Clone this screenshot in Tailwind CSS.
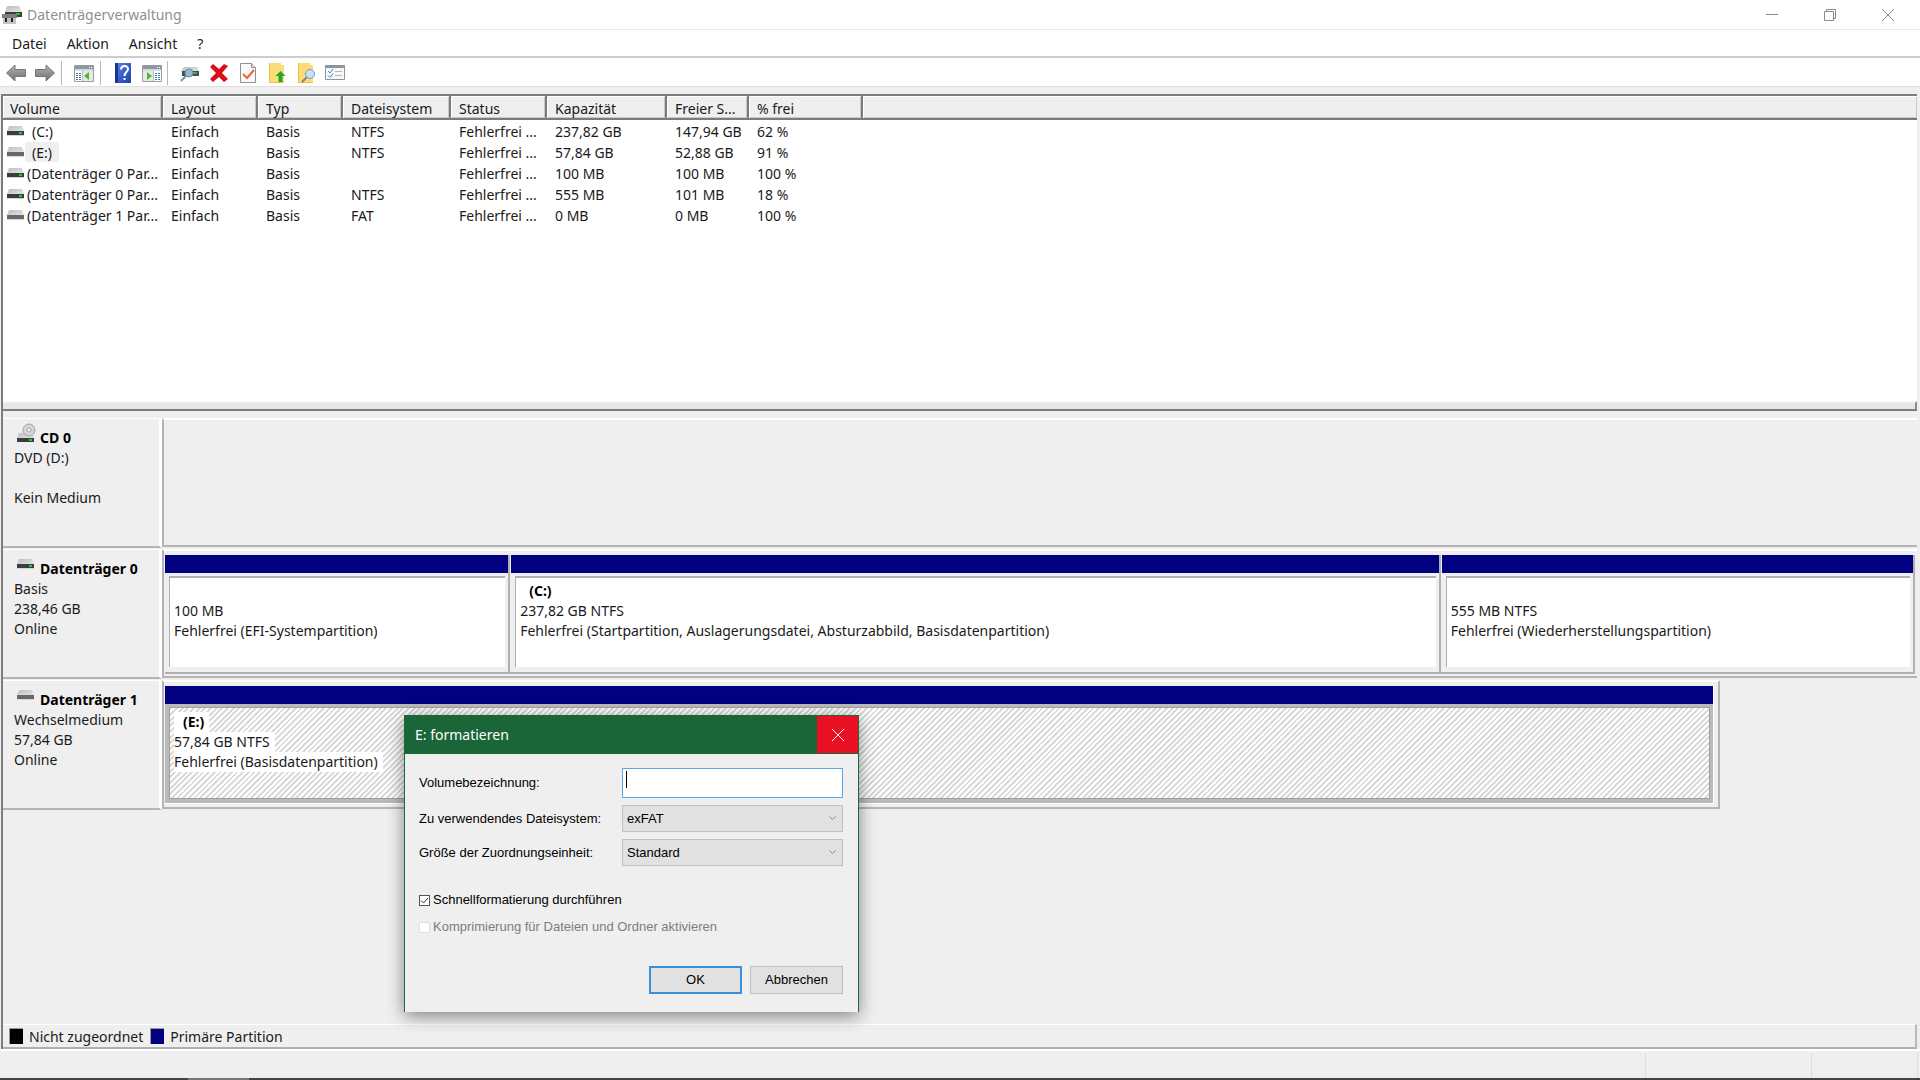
<!DOCTYPE html>
<html lang="de">
  <head>
    <meta charset="UTF-8" />
    <meta name="viewport" content="width=device-width, initial-scale=1.0" />
    <title>Datenträgerverwaltung</title>
    <script src="https://cdn.jsdelivr.net/npm/@tailwindcss/browser@4"></script>
  </head>
  <body class="relative min-h-screen flex flex-col bg-[#efefef] text-[#1a1a1a] text-[14px] leading-5 font-['Noto_Sans','Open_Sans',sans-serif] whitespace-nowrap">
    <!-- Icons -->
    <svg class="absolute w-0 h-0">
      <defs>
        <linearGradient id="metal" x1="0" y1="0" x2="1" y2="1">
          <stop offset="0" stop-color="#b9bec2" />
          <stop offset="1" stop-color="#e2e5e8" />
        </linearGradient>
        <linearGradient id="arrow" x1="0" y1="0" x2="0" y2="1">
          <stop offset="0" stop-color="#b5b5b5" />
          <stop offset="1" stop-color="#6e6e6e" />
        </linearGradient>
        <linearGradient id="book" x1="0" y1="0" x2="1" y2="1">
          <stop offset="0" stop-color="#5b84e0" />
          <stop offset="1" stop-color="#1c3fae" />
        </linearGradient>
      </defs>
      <symbol id="drive" viewBox="0 0 17 10">
        <path d="M2 0h13l2 5H0z" fill="url(#metal)" />
        <path d="M0 5h17v4H0z" fill="#3a3c3e" />
        <path d="M0 9h17v1H0z" fill="#d4d6d8" />
        <path d="M12 6h3v2h-3z" fill="#1fd02f" />
      </symbol>
      <symbol id="removable" viewBox="0 0 17 10">
        <path d="M2 0h13l2 5H0z" fill="url(#metal)" />
        <path d="M0 5h17v4H0z" fill="#66686a" />
        <path d="M0 9h17v1H0z" fill="#d4d6d8" />
      </symbol>
    </svg>

    <!-- Titelleiste -->
    <header class="h-[30px] flex items-center pr-[3px] bg-white border-b border-[#e8e8e8] text-[#8f8f8f]">
      <svg class="w-5 h-5 ml-[2px] mr-[5px]" viewBox="0 0 20 20">
        <path d="M5 1h12l3 6H3z" fill="url(#metal)" />
        <path d="M3 7h17v5H3z" fill="#3a3c3e" />
        <path d="M14 8h4v2h-4z" fill="#1fc52f" />
        <path d="M0 9h15v4h-1v6H1v-6H0z" fill="#7d7f80" />
        <path d="M1 13h13v6H1z" fill="#c3c4c5" />
        <path d="M3 13h2v4H3zM9 13h2v4H9z" fill="#222" />
      </svg>
      <h1 class="flex-1">Datenträgerverwaltung</h1>
      <button class="w-[58px] h-full flex items-center justify-center" aria-label="Minimieren">
        <svg class="w-3 h-3" viewBox="0 0 12 12" stroke="#8a8a8a" fill="none"><path d="M0 5.5h12" /></svg>
      </button>
      <button class="w-[58px] h-full flex items-center justify-center" aria-label="Verkleinern">
        <svg class="w-3 h-3" viewBox="0 0 12 12" stroke="#8a8a8a" fill="none"><path d="M.5 2.5h9v9h-9zM2.500 2.500v-2h9v9h-2" /></svg>
      </button>
      <button class="w-[58px] h-full flex items-center justify-center" aria-label="Schließen">
        <svg class="w-3 h-3" viewBox="0 0 12 12" stroke="#8a8a8a" fill="none"><path d="M0 0l12 12M12 0L0 12" /></svg>
      </button>
    </header>

    <!-- Menü -->
    <nav class="h-7 flex items-center gap-5 pl-3 pt-[2px] bg-white border-b-2 border-[#cdcdd1]">
      <a href="#">Datei</a>
      <a href="#">Aktion</a>
      <a href="#">Ansicht</a>
      <a href="#">?</a>
    </nav>

    <!-- Symbolleiste -->
    <div class="h-[29px] flex items-center pl-px pt-[2px] bg-white border-b border-[#dedede]">
      <button class="w-[29px] flex justify-center" aria-label="Zurück">
        <svg class="w-5 h-5" viewBox="0 0 20 20"><path d="M.5 10L9 2v4.500h10.500v7H9V18z" fill="url(#arrow)" stroke="#777" /></svg>
      </button>
      <button class="w-[29px] flex justify-center" aria-label="Vorwärts">
        <svg class="w-5 h-5" viewBox="0 0 20 20"><path d="M19.500 10L11 2v4.500H.5v7H11V18z" fill="url(#arrow)" stroke="#777" /></svg>
      </button>
      <span class="w-px h-6 ml-[2px] mr-[7px] bg-[#b8b8b8]"></span>
      <button class="w-[29px] flex justify-center" aria-label="Konsolenstruktur">
        <svg class="w-5 h-5" viewBox="0 0 20 20">
          <path d="M.5 2.500h19v16H.5z" fill="#fff" stroke="#9a9da0" />
          <path d="M1 3h18v3H1z" fill="#8b97a3" /><path d="M15 4h1v1h-1zM17 4h1v1h-1z" fill="#fff" />
          <path d="M1 6h18v2H1z" fill="#d5dade" />
          <path d="M8 8h1v10H8z" fill="#b9bdc0" /><path d="M9 8h10v10H9z" fill="#e6e8ea" />
          <path d="M2 10h2v1H2zM2 12h2v1H2zM2 14h2v1H2zM2 16h2v1H2zM5 10h2v1H5zM5 12h2v1H5zM5 14h2v1H5zM5 16h2v1H5z" fill="#4276a8" />
          <path d="M15 9v8l-5-4z" fill="#4fb82f" />
        </svg>
      </button>
      <span class="w-px h-6 ml-[2px] mr-[7px] bg-[#b8b8b8]"></span>
      <button class="w-[29px] flex justify-center" aria-label="Hilfe">
        <svg class="w-5 h-5" viewBox="0 0 20 20">
          <path d="M2 0h16v20H2z" fill="url(#book)" /><path d="M2 0h3v20H2z" fill="#16349a" />
          <path d="M8 6.500C8 2 15 2 15 6c0 3-3.500 3-3.500 7" fill="none" stroke="#fff" stroke-width="2" />
          <path d="M10.500 15h2v2h-2z" fill="#fff" />
        </svg>
      </button>
      <button class="w-[29px] flex justify-center" aria-label="Aktionsbereich">
        <svg class="w-5 h-5" viewBox="0 0 20 20">
          <path d="M.5 2.500h19v16H.5z" fill="#fff" stroke="#9a9da0" />
          <path d="M1 3h18v3H1z" fill="#8b97a3" /><path d="M15 4h1v1h-1zM17 4h1v1h-1z" fill="#fff" />
          <path d="M1 6h18v2H1z" fill="#d5dade" />
          <path d="M1 8h10v10H1z" fill="#e6e8ea" /><path d="M11 8h1v10h-1z" fill="#b9bdc0" />
          <path d="M13 10h2v1h-2zM13 12h2v1h-2zM13 14h2v1h-2zM13 16h2v1h-2zM16 10h2v1h-2zM16 12h2v1h-2zM16 14h2v1h-2zM16 16h2v1h-2z" fill="#4276a8" />
          <path d="M5 9v8l5-4z" fill="#4fb82f" />
        </svg>
      </button>
      <span class="w-px h-6 ml-px mr-[7px] bg-[#b8b8b8]"></span>
      <button class="w-[29px] flex justify-center" aria-label="Datenträger prüfen">
        <svg class="w-5 h-5" viewBox="0 0 20 20">
          <path d="M4 4h13l2 4H1z" fill="url(#metal)" /><path d="M2 8h17v5H2z" fill="#4a4c4e" />
          <path d="M13 9h4v2h-4z" fill="#1fc52f" />
          <path d="M6 13l-5 5" stroke="#8a9095" stroke-width="2" />
          <circle cx="9" cy="10" r="4" fill="#8fb9d8" stroke="#6d8ba0" />
        </svg>
      </button>
      <button class="w-[29px] flex justify-center" aria-label="Löschen">
        <svg class="w-5 h-5" viewBox="0 0 20 20"><path d="M1 4l3-3 6 5 5-5 4 2-6 7 6 6-4 3-5-5-6 5-3-3 6-6z" fill="#d80f16" /></svg>
      </button>
      <button class="w-[29px] flex justify-center" aria-label="Eigenschaften">
        <svg class="w-5 h-5" viewBox="0 0 20 20">
          <path d="M2.500.5h11l4 4v15h-15z" fill="#fafafa" stroke="#8f8f8f" /><path d="M13.500.5v4h4" fill="#ddd" stroke="#8f8f8f" />
          <path d="M5 11l4 4 7-8" fill="none" stroke="#f0622b" stroke-width="2" />
        </svg>
      </button>
      <button class="w-[29px] flex justify-center" aria-label="Nach oben">
        <svg class="w-5 h-5" viewBox="0 0 20 20">
          <path d="M2 0h12v2h3v18H2z" fill="#fbdc78" /><path d="M2 0h1v20H2zM2 19h15v1H2z" fill="#e9bf4c" />
          <path d="M13.500 8l5 5h-3v6h-4v-6h-3z" fill="#21a82a" />
        </svg>
      </button>
      <button class="w-[29px] flex justify-center" aria-label="Suchen">
        <svg class="w-5 h-5" viewBox="0 0 20 20">
          <path d="M2 0h12v2h3v18H2z" fill="#fbdc78" /><path d="M2 0h1v20H2zM2 19h15v1H2z" fill="#e9bf4c" />
          <path d="M11 14l-5 5" stroke="#7b858c" stroke-width="2" />
          <circle cx="14" cy="11" r="4.500" fill="#c3e2f5" stroke="#7f98a8" />
        </svg>
      </button>
      <button class="w-[29px] flex justify-center" aria-label="Liste">
        <svg class="w-5 h-5" viewBox="0 0 20 20">
          <path d="M.5 2.500h19v14H.5z" fill="#f8f8f8" stroke="#8d949a" /><path d="M0 2h20v3H0z" fill="#8d949a" />
          <path d="M3 8l2 2 3-4M3 12.500l2 2 3-4" fill="none" stroke="#2d8ad8" />
          <path d="M10 8.500h7M10 12.500h7" stroke="#b5b5b5" />
        </svg>
      </button>
    </div>

    <!-- Volumeliste -->
    <main class="flex-1 flex flex-col mt-[7px] ml-px mr-[3px] border-l-2 border-t-2 border-[#7c7c7c]">
      <section class="h-[315px] shrink-0 bg-white border-b-2 border-[#7c7c7c] flex flex-col">
        <table class="w-full table-fixed border-separate border-spacing-0 text-left">
          <colgroup>
            <col class="w-[160px]" />
            <col class="w-[95px]" />
            <col class="w-[85px]" />
            <col class="w-[108px]" />
            <col class="w-[96px]" />
            <col class="w-[120px]" />
            <col class="w-[82px]" />
            <col class="w-[114px]" />
            <col />
          </colgroup>
          <thead>
            <tr class="h-6 bg-[#efefef] *:p-0 *:pt-1 *:leading-[18px] *:font-normal *:border-b-2 *:border-r-2 *:border-[#7c7c7c] *:shadow-[inset_1px_1px_0_#fff,inset_-1px_-1px_0_#c8c8c8]">
              <th><span class="pl-[7px]">Volume</span></th>
              <th><span class="pl-2">Layout</span></th>
              <th><span class="pl-2">Typ</span></th>
              <th><span class="pl-2">Dateisystem</span></th>
              <th><span class="pl-2">Status</span></th>
              <th><span class="pl-2">Kapazität</span></th>
              <th><span class="pl-2">Freier S...</span></th>
              <th><span class="pl-2">% frei</span></th>
              <th class="border-r-0!"></th>
            </tr>
          </thead>
          <tbody class="[&_td]:p-0 [&_td]:pt-[3px] [&_td]:pl-2 [&_td]:h-[21px] leading-[18px]">
            <tr>
              <td class="pl-1!"><div class="flex"><svg class="w-[17px] h-[10px] mt-[3px] mr-px"><use href="#drive" /></svg><span class="px-[7px]">(C:)</span></div></td>
              <td>Einfach</td><td>Basis</td><td>NTFS</td><td>Fehlerfrei ...</td><td>237,82 GB</td><td>147,94 GB</td><td>62 %</td><td></td>
            </tr>
            <tr>
              <td class="pl-1!"><div class="flex"><svg class="w-[17px] h-[10px] mt-[3px] mr-px"><use href="#removable" /></svg><span class="px-[7px] -mt-[2px] pt-[2px] bg-[#efefef]">(E:)</span></div></td>
              <td>Einfach</td><td>Basis</td><td>NTFS</td><td>Fehlerfrei ...</td><td>57,84 GB</td><td>52,88 GB</td><td>91 %</td><td></td>
            </tr>
            <tr>
              <td class="pl-1!"><div class="flex"><svg class="w-[17px] h-[10px] mt-[3px] mr-[3px]"><use href="#drive" /></svg>(Datenträger 0 Par...</div></td>
              <td>Einfach</td><td>Basis</td><td></td><td>Fehlerfrei ...</td><td>100 MB</td><td>100 MB</td><td>100 %</td><td></td>
            </tr>
            <tr>
              <td class="pl-1!"><div class="flex"><svg class="w-[17px] h-[10px] mt-[3px] mr-[3px]"><use href="#drive" /></svg>(Datenträger 0 Par...</div></td>
              <td>Einfach</td><td>Basis</td><td>NTFS</td><td>Fehlerfrei ...</td><td>555 MB</td><td>101 MB</td><td>18 %</td><td></td>
            </tr>
            <tr>
              <td class="pl-1!"><div class="flex"><svg class="w-[17px] h-[10px] mt-[3px] mr-[3px]"><use href="#removable" /></svg>(Datenträger 1 Par...</div></td>
              <td>Einfach</td><td>Basis</td><td>FAT</td><td>Fehlerfrei ...</td><td>0 MB</td><td>0 MB</td><td>100 %</td><td></td>
            </tr>
          </tbody>
        </table>
        <div class="mt-auto h-[8px] bg-[#e6e6e6] border-t-2 border-[#f2f2f2] border-r-2 border-r-[#8a8a8a]"></div>
      </section>

      <!-- Grafische Ansicht -->
      <section class="flex-1 pt-[7px]">
        <!-- CD 0 -->
        <div class="h-[131px] flex">
          <div class="w-[159px] h-[130px] pl-[11px] pt-[9px] border-t border-t-white border-b-2 border-b-[#b4b4b4] border-r-[3px] border-r-white">
            <div class="flex items-start font-bold text-black">
              <svg class="w-[19px] h-5 -mt-[5px] ml-[3px] mr-1" viewBox="0 0 19 20">
                <path d="M2 10h13l2 5H0z" fill="url(#metal)" /><path d="M0 15h17v4H0z" fill="#3a3c3e" /><path d="M12 16h3v2h-3z" fill="#1fd02f" />
                <circle cx="12" cy="7" r="6" fill="#d3d6d9" stroke="#a0a4a8" /><circle cx="12" cy="7" r="2" fill="#f5f5f5" stroke="#a0a4a8" />
              </svg>
              CD 0
            </div>
            <p>DVD (D:)</p>
            <p class="mt-5">Kein Medium</p>
          </div>
          <div class="flex-1 h-[129px] border-t-2 border-t-white border-l-2 border-l-[#b4b4b4] border-b-2 border-b-[#b4b4b4]"></div>
        </div>

        <!-- Datenträger 0 -->
        <div class="h-[131px] flex">
          <div class="w-[159px] h-[130px] pl-[11px] pt-[9px] border-t border-t-white border-b-2 border-b-[#b4b4b4] border-r-[3px] border-r-white">
            <div class="flex items-start font-bold text-black">
              <svg class="w-[17px] h-[10px] ml-[3px] mr-[6px]"><use href="#drive" /></svg>
              Datenträger 0
            </div>
            <p>Basis</p>
            <p>238,46 GB</p>
            <p>Online</p>
          </div>
          <div class="flex-1 h-[129px] pt-[4px] pl-px pr-[2px] border-t-2 border-t-white border-l-2 border-l-[#b4b4b4] border-b-2 border-b-[#b4b4b4] grid grid-cols-[345fr_930fr_474fr]">
            <div class="h-[119px] border-r-2 border-b-2 border-[#b0b0b0]">
              <div class="h-[18px] bg-[#000080]"></div>
              <div class="h-[91px] mt-[3px] ml-[4px] mr-[3px] pl-1 pt-[23px] bg-white border-t-2 border-l border-[#b0b0b0]">
                <p>100 MB</p>
                <p>Fehlerfrei (EFI-Systempartition)</p>
              </div>
            </div>
            <div class="h-[119px] border-r-2 border-b-2 border-[#b0b0b0]">
              <div class="h-[18px] ml-px bg-[#000080]"></div>
              <div class="h-[91px] mt-[3px] ml-[5px] mr-[3px] pl-1 pt-[3px] bg-white border-t-2 border-l border-[#b0b0b0]">
                <p class="pl-[9px] font-bold text-black">(C:)</p>
                <p>237,82 GB NTFS</p>
                <p>Fehlerfrei (Startpartition, Auslagerungsdatei, Absturzabbild, Basisdatenpartition)</p>
              </div>
            </div>
            <div class="h-[119px] border-r-2 border-b-2 border-[#b0b0b0]">
              <div class="h-[18px] ml-px bg-[#000080]"></div>
              <div class="h-[91px] mt-[3px] ml-[5px] mr-[3px] pl-1 pt-[23px] bg-white border-t-2 border-l border-[#b0b0b0]">
                <p>555 MB NTFS</p>
                <p>Fehlerfrei (Wiederherstellungspartition)</p>
              </div>
            </div>
          </div>
        </div>

        <!-- Datenträger 1 -->
        <div class="h-[131px] flex">
          <div class="w-[159px] h-[130px] pl-[11px] pt-[9px] border-t border-t-white border-b-2 border-b-[#b4b4b4] border-r-[3px] border-r-white">
            <div class="flex items-start font-bold text-black">
              <svg class="w-[17px] h-[10px] ml-[3px] mr-[6px]"><use href="#removable" /></svg>
              Datenträger 1
            </div>
            <p>Wechselmedium</p>
            <p>57,84 GB</p>
            <p>Online</p>
          </div>
          <div class="flex-1 grid grid-cols-[1558fr_197fr]">
            <div class="h-[129px] pt-[4px] pl-px pr-[4px] border-t-2 border-t-white border-x-2 border-b-2 border-x-[#b4b4b4] border-b-[#b4b4b4]">
              <div class="h-[118px] bg-[#bababa] border-b border-r border-white">
                <div class="h-[18px] bg-[#000080]"></div>
                <div class="h-[92px] mt-[3px] ml-[4px] mr-[3px] pl-1 pt-[4px] border border-[#a0a0a0] bg-[repeating-linear-gradient(135deg,#dadada_0_2px,#fff_2px_4px)]">
                  <p class="w-fit pl-[9px] pr-[5px] bg-white font-bold text-black">(E:)</p>
                  <p class="w-fit pr-[5px] bg-white">57,84 GB NTFS</p>
                  <p class="w-fit pr-[5px] bg-white">Fehlerfrei (Basisdatenpartition)</p>
                </div>
              </div>
            </div>
          </div>
        </div>
      </section>

      <!-- Legende -->
      <div class="h-[25px] flex items-center pl-[6px] border-t border-t-white border-b-2 border-b-[#b0b0b0] border-r-2 border-r-[#b8b8b8]">
        <span class="w-[14px] h-4 bg-black border-t border-l border-[#999]"></span>
        <span class="ml-[6px] mr-[7px] pt-[2px]">Nicht zugeordnet</span>
        <span class="w-[14px] h-4 bg-[#000080] border-t border-l border-[#999]"></span>
        <span class="ml-[6px] pt-[2px]">Primäre Partition</span>
      </div>
    </main>

    <!-- Statusleiste -->
    <footer class="h-[29px] border-t-2 border-white flex justify-end pt-[2px]">
      <div class="w-[166px] border-l border-[#dedede]"></div>
      <div class="w-[107px] border-x border-[#dedede] mr-[2px]"></div>
    </footer>
    <div class="h-[2px] bg-[#434343] pl-[188px]"><div class="w-[61px] h-full bg-[#777]"></div></div>

    <!-- Dialog -->
    <form class="absolute left-[404px] top-[715px] w-[455px] h-[297px] flex flex-col bg-[#efefef] border-x border-[#1a6b3a] shadow-[0_4px_16px_rgba(0,0,0,0.45)] text-[13px] text-black font-['Liberation_Sans',Arial,sans-serif]" role="dialog" aria-labelledby="dialogTitle">
      <div class="h-[39px] flex items-center pl-[10px] bg-[#1a6638] text-white">
        <h2 id="dialogTitle" class="flex-1 text-[14px] font-['Noto_Sans','Open_Sans',sans-serif]">E: formatieren</h2>
        <button type="button" class="w-[41px] h-[37px] flex items-center justify-center bg-[#e81123]" aria-label="Schließen">
          <svg class="w-3 h-3" viewBox="0 0 12 12" stroke="#fff" fill="none"><path d="M0 0l12 12M12 0L0 12" /></svg>
        </button>
      </div>
      <div class="flex-1 flex flex-col pl-[14px] pr-[15px] pt-[14px] pb-[18px]">
        <div class="grid grid-cols-[203px_1fr] items-center gap-y-[7px]">
          <label for="label">Volumebezeichnung:</label>
          <div class="relative">
            <input id="label" type="text" class="block w-full h-[30px] px-1 bg-white border border-[#5aa7e8] outline-none" />
            <span class="absolute left-1 top-[3px] w-px h-[17px] bg-black"></span>
          </div>
          <label for="fs">Zu verwendendes Dateisystem:</label>
          <div class="relative">
            <select id="fs" class="block w-full h-[27px] px-1 appearance-none bg-[#e1e1e1] border border-[#c0c0c0]">
              <option>exFAT</option>
              <option>NTFS</option>
            </select>
            <svg class="absolute right-[7px] top-[11px] w-[7px] h-[5px]" viewBox="0 0 7 5" stroke="#888" fill="none"><path d="M.5.5l3 3 3-3" /></svg>
          </div>
          <label for="unit">Größe der Zuordnungseinheit:</label>
          <div class="relative">
            <select id="unit" class="block w-full h-[27px] px-1 appearance-none bg-[#e1e1e1] border border-[#c0c0c0]">
              <option>Standard</option>
            </select>
            <svg class="absolute right-[7px] top-[11px] w-[7px] h-[5px]" viewBox="0 0 7 5" stroke="#888" fill="none"><path d="M.5.5l3 3 3-3" /></svg>
          </div>
        </div>
        <div class="mt-[24px] flex items-center">
          <span class="relative mr-[3px]">
            <input id="quick" type="checkbox" checked class="peer block appearance-none w-[11px] h-[11px] bg-white border border-[#555]" />
            <svg class="absolute left-px top-px w-[9px] h-[9px] pointer-events-none hidden peer-checked:block" viewBox="0 0 9 9" stroke="#333" fill="none"><path d="M1 4.500l2.500 2.500 4.500-5" /></svg>
          </span>
          <label for="quick">Schnellformatierung durchführen</label>
        </div>
        <div class="mt-[7px] flex items-center text-[#7d7d7d]">
          <input id="compress" type="checkbox" disabled class="block mr-[3px] appearance-none w-[11px] h-[11px] bg-white border border-[#e0e0e0]" />
          <label for="compress">Komprimierung für Dateien und Ordner aktivieren</label>
        </div>
        <div class="mt-auto flex justify-end gap-2">
          <button type="submit" class="w-[93px] h-7 bg-[#e1e1e1] border-2 border-[#3a90dc]">OK</button>
          <button type="button" class="w-[93px] h-7 bg-[#e1e1e1] border border-[#c0c0c0]">Abbrechen</button>
        </div>
      </div>
    </form>
  </body>
</html>
